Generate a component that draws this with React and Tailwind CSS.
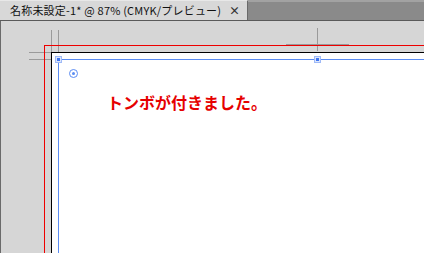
export default function App() {
  return (
    <div className="w-[424px] h-[253px] flex flex-col overflow-hidden bg-[#d6d6d6] font-['Noto_Sans_CJK_JP',sans-serif]">
      {/* document tab bar */}
      <div className="h-[20px] flex shrink-0">
        <div className="w-[248px] flex items-center pl-[10px] pr-[7px] bg-[#d8d8d8] border-t border-[#e8e8e8] border-r border-r-[#6a6a6a]">
          <span className="text-[11px] leading-none text-[#111] tracking-[0.2px] whitespace-nowrap">
            名称未設定-1* @ 87% (CMYK/プレビュー)
          </span>
          <span className="ml-auto text-[11px] leading-none font-bold text-[#333]">×</span>
        </div>
        <div className="flex-1 bg-[#8a8a8a] border-t-2 border-[#a2a2a2]" />
      </div>
      <div className="h-px bg-[#5a5a5a] shrink-0" />

      {/* canvas */}
      <div className="relative flex-1 flex pl-[43px] pt-[24px] border-l border-[#6a6a6a] bg-[#d6d6d6]">
        {/* corner crop marks */}
        <div className="absolute left-[50px] top-[9px] w-px h-[23px] bg-[#9a9a9a]" />
        <div className="absolute left-[57px] top-[9px] w-px h-[23px] bg-[#9a9a9a]" />
        <div className="absolute left-[28px] top-[31px] w-[23px] h-px bg-[#9a9a9a]" />
        <div className="absolute left-[28px] top-[38px] w-[23px] h-px bg-[#9a9a9a]" />

        {/* center crop mark */}
        <div className="absolute left-[316px] top-[7px] w-px h-[23px] bg-[#9a9a9a]" />
        <div className="absolute left-[285px] top-[23px] w-[63px] h-px bg-[#9a9a9a]" />

        {/* bleed */}
        <div className="relative flex-1 flex pl-[6px] pt-[6px] border-l border-t border-[#ee0000]">
          {/* artboard */}
          <div className="relative flex-1 flex pl-[6px] pt-[6px] bg-white border-l border-t border-black">
            {/* margin guide */}
            <div className="relative flex-1 flex flex-col items-start pl-[10px] pt-[9px] border-l border-t border-[#5b8cf2]">
              <div className="absolute -left-[4px] -top-[4px] w-[7px] h-[7px] bg-[#dbe6fd] border border-[#9fbaf7] flex items-center justify-center">
                <div className="w-[3px] h-[3px] bg-[#3f75f0]" />
              </div>
              <div className="absolute left-[255px] -top-[4px] w-[7px] h-[7px] bg-[#dbe6fd] border border-[#9fbaf7] flex items-center justify-center">
                <div className="w-[3px] h-[3px] bg-[#3f75f0]" />
              </div>

              {/* origin target */}
              <div className="w-[9px] h-[9px] rounded-full border-[1.5px] border-[#5b8cf2] flex items-center justify-center">
                <div className="w-[3px] h-[3px] rounded-full bg-[#5b8cf2]" />
              </div>

              <div className="ml-[38px] mt-[16px] text-[16px] leading-none font-bold text-[#e60000] whitespace-nowrap">
                トンボが付きました。
              </div>
            </div>
          </div>
        </div>
      </div>
    </div>
  );
}
